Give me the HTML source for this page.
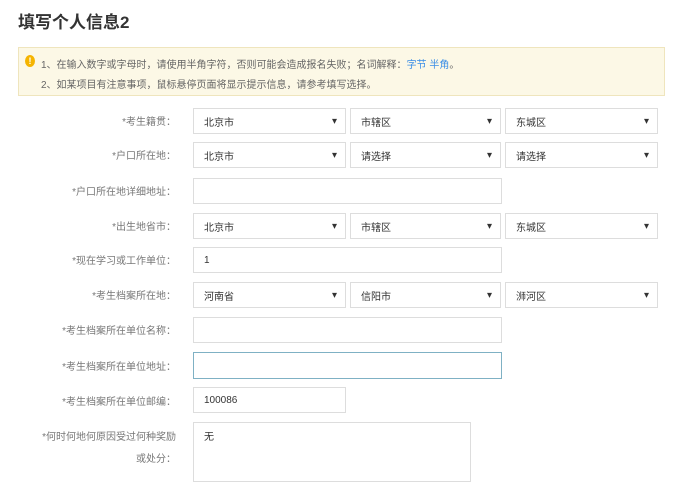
<!DOCTYPE html>
<html><head><meta charset="utf-8"><style>
body{margin:0;width:680px;height:494px;background:#fff;font-family:"Liberation Sans","Noto Sans CJK SC",sans-serif;position:relative;overflow:hidden}
.a{position:absolute}
h1{position:absolute;left:18px;top:8px;margin:0;font-size:17px;font-weight:bold;color:#333}
.note{left:18px;top:47px;width:647px;height:49px;background:#fcf8e6;border:1px solid #efe5bd;box-sizing:border-box;font-size:10px;color:#666}
.lab{font-size:10px;color:#777;text-align:right;width:180px;left:0}
.box{border:1px solid #ddd;box-sizing:border-box;background:#fff;font-size:10px;color:#333;padding-left:10px;display:flex;align-items:center}
.sel{padding-right:8px}
.sel::after{content:"▾";margin-left:auto;font-size:10px;color:#333}
</style></head><body>
<h1>填写个人信息2</h1>
<div class="a note">
<div class="a" style="left:6px;top:7px;width:10px;height:12px;border-radius:50%;background:#f5b400;color:#fff;font-size:9px;text-align:center;line-height:12px;font-weight:bold">!</div>
<div class="a" style="left:22px;top:8px">1、在输入数字或字母时，请使用半角字符，否则可能会造成报名失败；名词解释：<span style="color:#3a8ee6">字节 半角</span>。</div>
<div class="a" style="left:22px;top:28px">2、如某项目有注意事项，鼠标悬停页面将显示提示信息，请参考填写选择。</div>
</div>

<div class="a lab" style="top:113px;width:176px">*考生籍贯：</div>
<div class="a box sel" style="left:193px;top:108px;width:153px;height:26px">北京市</div>
<div class="a box sel" style="left:350px;top:108px;width:151px;height:26px">市辖区</div>
<div class="a box sel" style="left:505px;top:108px;width:153px;height:26px">东城区</div>

<div class="a lab" style="top:147px;width:176px">*户口所在地：</div>
<div class="a box sel" style="left:193px;top:142px;width:153px;height:26px">北京市</div>
<div class="a box sel" style="left:350px;top:142px;width:151px;height:26px">请选择</div>
<div class="a box sel" style="left:505px;top:142px;width:153px;height:26px">请选择</div>

<div class="a lab" style="top:183px;width:176px">*户口所在地详细地址：</div>
<div class="a box" style="left:193px;top:178px;width:309px;height:26px"></div>

<div class="a lab" style="top:218px;width:176px">*出生地省市：</div>
<div class="a box sel" style="left:193px;top:213px;width:153px;height:26px">北京市</div>
<div class="a box sel" style="left:350px;top:213px;width:151px;height:26px">市辖区</div>
<div class="a box sel" style="left:505px;top:213px;width:153px;height:26px">东城区</div>

<div class="a lab" style="top:252px;width:176px">*现在学习或工作单位：</div>
<div class="a box" style="left:193px;top:247px;width:309px;height:26px">1</div>

<div class="a lab" style="top:287px;width:176px">*考生档案所在地：</div>
<div class="a box sel" style="left:193px;top:282px;width:153px;height:26px">河南省</div>
<div class="a box sel" style="left:350px;top:282px;width:151px;height:26px">信阳市</div>
<div class="a box sel" style="left:505px;top:282px;width:153px;height:26px">浉河区</div>

<div class="a lab" style="top:322px;width:176px">*考生档案所在单位名称：</div>
<div class="a box" style="left:193px;top:317px;width:309px;height:26px"></div>

<div class="a lab" style="top:358px;width:176px">*考生档案所在单位地址：</div>
<div class="a box" style="left:193px;top:352px;width:309px;height:27px;border-color:#7fb1c4"></div>

<div class="a lab" style="top:393px;width:176px">*考生档案所在单位邮编：</div>
<div class="a box" style="left:193px;top:387px;width:153px;height:26px">100086</div>

<div class="a lab" style="top:427px;width:176px;line-height:22px">*何时何地何原因受过何种奖励<br>或处分：</div>
<div class="a box" style="left:193px;top:422px;width:278px;height:60px;align-items:flex-start;padding-top:5px">无</div>
</body></html>
